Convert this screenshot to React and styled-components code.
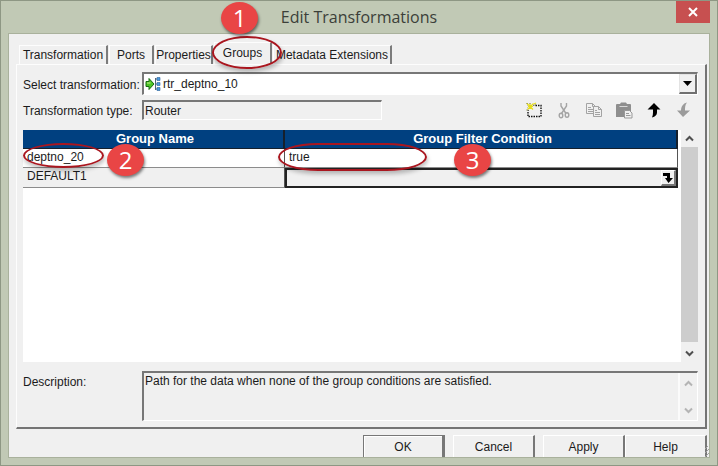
import React, { useState } from 'react'
import styled, { createGlobalStyle } from 'styled-components'

const GlobalStyle = createGlobalStyle`
    * {
        box-sizing: border-box;
    }
    body {
        margin: 0;
        font-family: "Liberation Sans", Arial, sans-serif;
        font-size: 12px;
        color: #1b1b1b;
    }
    button, input, select, textarea {
        font: inherit;
        color: inherit;
        margin: 0;
        padding: 0;
        border: 0;
        border-radius: 0;
        background: transparent;
        outline: none;
    }
`

const Window = styled.div`
    display: flex;
    flex-direction: column;
    min-height: 100vh;
    padding: 0 7px 7px;
    background: #c1c9b5;
    border: 1px solid #8e9784;
`

const TitleBar = styled.header`
    display: grid;
    grid-template-columns: 34px 1fr 34px;
    height: 32px;

    h1 {
        margin: 0;
        font: 400 16px/32px "Open Sans", "Noto Sans", sans-serif;
        color: #3c3f39;
        text-align: center;
    }
`

const CloseButton = styled.button`
    grid-column: 3;
    display: flex;
    align-items: center;
    justify-content: center;
    height: 22px;
    background: #c75050;
`

const Body = styled.main`
    position: relative;
    flex: 1;
    display: flex;
    flex-direction: column;
    padding: 8px 2px 0 7px;
    background: #f0f0f0;
    border: 1px solid #a9b19c;
`

const TabList = styled.div`
    display: flex;
    align-items: flex-end;
    gap: 1px;
    height: 22px;
    padding-left: 3px;
`

const Tab = styled.button`
    position: relative;
    width: ${p => p.$width}px;
    height: ${p => p.$active ? '22px' : '19px'};
    padding-bottom: ${p => p.$active ? '1px' : '0'};
    white-space: nowrap;
    border-top: 1px solid #fdfdfd;
    border-left: 1px solid #fdfdfd;
    border-right: 2px solid #7c7c7c;
`

const Panel = styled.section`
    flex: 1;
    display: flex;
    flex-direction: column;
    padding: 7px 7px 6px 6px;
    border: solid;
    border-width: 1px 2px 2px 1px;
    border-color: #fdfdfd #747474 #747474 #fdfdfd;
`

const FieldRow = styled.div`
    display: grid;
    grid-template-columns: 119px 1fr auto;
    align-items: ${p => p.$top ? 'start' : 'center'};
    margin-top: ${p => p.$gap || 0}px;

    label {
        padding-top: ${p => p.$top ? '4px' : '2px'};
    }
`

const Sunken = styled.div`
    display: flex;
    align-items: center;
    border: solid;
    border-width: 2px 1px 1px 2px;
    border-color: #777 #fff #fff #777;
`

const Combo = styled(Sunken)`
    grid-column: 2 / 4;
    height: 23px;
    padding-left: 1px;
    gap: 2px;
    background: #fff;

    select {
        flex: 1;
        height: 20px;
        appearance: none;
    }
`

const ComboArrow = styled.span`
    display: flex;
    align-items: center;
    justify-content: center;
    width: 18px;
    height: 20px;
    background: #f0f0f0;
    border: solid;
    border-width: 1px 2px 2px 1px;
    border-color: #e3e3e3 #707070 #707070 #e3e3e3;
`

const TypeField = styled(Sunken)`
    width: 240px;
    height: 20px;

    input {
        width: 100%;
        padding-left: 1px;
    }
`

const Toolbar = styled.div`
    display: flex;
    gap: 10px;
    padding-right: 4px;
`

const ToolButton = styled.button`
    display: flex;
    align-items: center;
    justify-content: center;
    width: 20px;
    height: 20px;
`

const GridArea = styled.div`
    flex: 1;
    display: flex;
    align-items: flex-start;
    gap: 3px;
    margin-top: 10px;
    background: #fff;
`

const Grid = styled.table`
    flex: 1;
    table-layout: fixed;
    border-collapse: separate;
    border-spacing: 0;

    th {
        height: 19px;
        padding: 0 0 0 4px;
        font-size: 13px;
        line-height: 16px;
        color: #fff;
        background: #004080;
        border-right: 2px solid #16202c;
        border-bottom: 1px solid #16202c;
    }
    th:first-child {
        width: 40%;
    }
`

const Cell = styled.td`
    position: relative;
    height: ${p => p.$grey ? '20px' : '19px'};
    padding: 0 0 0 4px;
    line-height: 16px;
    vertical-align: top;
    background: ${p => p.$grey ? '#f0f0f0' : '#fff'};
    border-right: 1px solid #555;
    border-bottom: 1px solid #8c8c8c;
    ${p => p.$focused && 'border: 2px solid #222;'}

    div {
        display: flex;
        justify-content: space-between;
    }
    input {
        display: block;
        width: 100%;
        height: 15px;
    }
`

const OpenEditor = styled.button`
    display: flex;
    align-items: center;
    justify-content: center;
    flex: none;
    width: 15px;
    height: 16px;
    border: solid;
    border-width: 1px 2px 2px 1px;
    border-color: #fff #777 #777 #fff;
`

const ScrollBar = styled.div`
    align-self: stretch;
    display: flex;
    flex-direction: column;
    justify-content: space-between;
    width: 17px;
    color: ${p => p.$off ? '#b4b4b4' : '#505050'};
    background: #f0f0f0;

    button {
        display: flex;
        align-items: center;
        justify-content: center;
        height: ${p => p.$off ? '20px' : '17px'};
    }
`

const Thumb = styled.div`
    flex: 1;
    margin-bottom: 3px;
    background: #cdcdcd;
`

const Description = styled(Sunken)`
    grid-column: 2 / 4;
    height: 50px;
    align-items: stretch;

    textarea {
        flex: 1;
        padding: 1px;
        line-height: 15px;
        resize: none;
        overflow: hidden;
        border-right: 2px solid #fbfbfb;
    }
`

const Footer = styled.footer`
    display: flex;
    justify-content: flex-end;
    margin-top: 6px;
`

const FooterButton = styled.button`
    width: 82px;
    height: 22px;
    margin-right: ${p => p.$gap || 0}px;
    border: solid;
    border-width: 1px 2px 0 1px;
    border-color: #fff #777 #777 #fff;
    ${p => p.$primary && `
        border-color: #777;
        border-width: 1px 3px 0 1px;
        box-shadow: inset 1px 1px #fff;
    `}
`

const SizeGrip = styled.svg`
    position: absolute;
    right: 0;
    bottom: 0;
`

// red ellipse and numbered bubble, both are placed over their parent
const Ring = styled.span`
    position: absolute;
    z-index: 1;
    left: ${p => p.$x}px;
    top: ${p => p.$y}px;
    width: ${p => p.$w}px;
    height: ${p => p.$h}px;
    border: 2px solid #a9161f;
    border-radius: ${p => p.$long ? '40px / 14px' : '50%'};
    box-shadow: 1px 3px 4px rgba(0, 0, 0, .25);
    pointer-events: none;
`

const Bubble = styled.span`
    position: absolute;
    z-index: 2;
    left: ${p => p.$x}px;
    top: ${p => p.$y}px;
    width: 37px;
    height: 32px;
    font: 400 24px/31px "Open Sans", "Noto Sans", sans-serif;
    color: #fff;
    text-align: center;
    background: #e94545;
    border-radius: 50%;
    box-shadow: 1px 2px 3px rgba(0, 0, 0, .5);
    pointer-events: none;
`

const Chevron = ({ up }) => (
    <svg width="9" height="7" viewBox="0 0 9 7" fill="none" stroke="currentColor" strokeWidth="2">
        <path d={up ? 'M1 5.5 4.5 2 8 5.5' : 'M1 1.5 4.5 5 8 1.5'} />
    </svg>
)

const RouterIcon = () => (
    <svg width="16" height="16" viewBox="0 0 16 16">
        <path d="M1 5.500h3V2.500L9 8l-5 5.500v-3H1z" fill="#4cc425" stroke="#176b12" />
        <path d="M2 7h3.500" stroke="#c4f08a" />
        <path d="M10.500 2v12M10 3h2M10 8h2M10 13h2" stroke="#53677d" fill="none" />
        <path d="M12 1.500h3v3h-3zM12 6.500h3v3h-3zM12 11.500h3v3h-3z" fill="#4a9be0" stroke="#2c6299" strokeWidth=".6" />
    </svg>
)

const NewIcon = () => (
    <svg width="18" height="18" viewBox="0 0 18 18" fill="none">
        <path d="M3 4.500h13v11H3z" stroke="#111" strokeWidth="1.400" strokeDasharray="1.500 1" />
        <path d="M5 1v9M1 5.500h9M2 2l6 7M8 2 2 9" stroke="#f0f0f0" strokeWidth="2" />
        <path d="M5 3v5M3 5.500h5M2 2.500l6 6M8.500 2.500l-6 6M9 3l2-1" stroke="#e5dc19" strokeWidth="1.200" />
        <path d="M1.500 2.500h1M4.500 2.500h1M10 4h1M1.500 9h1" stroke="#77772a" />
    </svg>
)

const CutIcon = () => (
    <svg width="12" height="17" viewBox="0 0 12 17" fill="none" stroke="#a3a3a3" strokeWidth="1.400">
        <path d="M3 1v3l5 7.500M8.500 1v3l-5 7.500" />
        <ellipse cx="3" cy="13.500" rx="1.800" ry="2.300" />
        <ellipse cx="9" cy="13" rx="1.800" ry="2.300" />
    </svg>
)

const CopyIcon = () => (
    <svg width="18" height="16" viewBox="0 0 18 16" fill="#f0f0f0" stroke="#a3a3a3">
        <path d="M1.500 1.500h6l3 3v7h-9zM7.500 1.500v3h3M3 5.500h3M3 7.500h5M3 9.500h5" />
        <path d="M8.500 4.500h5l3 3v7h-8zM13.500 4.500v3h3M10 8.500h2M10 10.500h5M10 12.500h5" />
    </svg>
)

const PasteIcon = () => (
    <svg width="18" height="17" viewBox="0 0 18 17">
        <path d="M1 3q0-1 1-1h3l1-1.500h5L12 2h3q1 0 1 1v12H1z" fill="#8e8e8e" />
        <path d="M4.500 4.500h8" stroke="#d8d8d8" />
        <path d="M9.500 8.500h5l2.500 2.500v5H9.500z" fill="#f0f0f0" stroke="#999" />
        <path d="M11 11.500h3M11 13.500h4.500" stroke="#999" />
    </svg>
)

const ArrowIcon = ({ down }) => (
    <svg width="14" height="16" viewBox="0 0 14 16" fill={down ? '#9b9b9b' : '#000'}>
        {down
            ? <path d="M6 15 0 8.500h4c0-4 2-7 6-8-2 2-2 5-2 8h5z" />
            : <path d="M7 1l6.500 6.500H10v3q0 3.500-5 5 1-2 1-5v-3H.500z" />}
    </svg>
)

const tabs = [
    { name: 'Transformation', width: 89 },
    { name: 'Ports', width: 45 },
    { name: 'Properties', width: 58 },
    { name: 'Groups', width: 58 },
    { name: 'Metadata Extensions', width: 119 },
]

const tools = [
    { name: 'New', icon: <NewIcon /> },
    { name: 'Cut', icon: <CutIcon /> },
    { name: 'Copy', icon: <CopyIcon /> },
    { name: 'Paste', icon: <PasteIcon /> },
    { name: 'Move up', icon: <ArrowIcon /> },
    { name: 'Move down', icon: <ArrowIcon down /> },
]

export default function App() {
    const [active, setActive] = useState('Groups')
    const [group, setGroup] = useState('deptno_20')
    const [filter, setFilter] = useState('true')

    return (
        <Window>
            <GlobalStyle />
            <TitleBar>
                <span />
                <h1>Edit Transformations</h1>
                <CloseButton aria-label="Close">
                    <svg width="10" height="10" viewBox="0 0 10 10" stroke="#fff" strokeWidth="2">
                        <path d="M1 1l8 8M9 1 1 9" />
                    </svg>
                </CloseButton>
            </TitleBar>
            <Body>
                <TabList role="tablist">
                    {tabs.map(t => (
                        <Tab
                            key={t.name}
                            role="tab"
                            aria-selected={active === t.name}
                            $active={active === t.name}
                            $width={t.width}
                            onClick={() => setActive(t.name)}
                        >
                            {t.name}
                            {t.name === 'Groups' && <>
                                <Ring $x={-3} $y={-7} $w={70} $h={33} />
                                <Bubble $x={6} $y={-41}>1</Bubble>
                            </>}
                        </Tab>
                    ))}
                </TabList>
                <Panel>
                    <FieldRow>
                        <label htmlFor="transformation">Select transformation:</label>
                        <Combo>
                            <RouterIcon />
                            <select id="transformation">
                                <option>rtr_deptno_10</option>
                            </select>
                            <ComboArrow>
                                <svg width="9" height="5" viewBox="0 0 9 5"><path d="M0 0h9L4.500 5z" /></svg>
                            </ComboArrow>
                        </Combo>
                    </FieldRow>
                    <FieldRow $gap={5}>
                        <label htmlFor="type">Transformation type:</label>
                        <TypeField>
                            <input id="type" value="Router" readOnly />
                        </TypeField>
                        <Toolbar>
                            {tools.map(t => (
                                <ToolButton key={t.name} aria-label={t.name}>{t.icon}</ToolButton>
                            ))}
                        </Toolbar>
                    </FieldRow>
                    <GridArea>
                        <Grid>
                            <thead>
                                <tr>
                                    <th>Group Name</th>
                                    <th>Group Filter Condition</th>
                                </tr>
                            </thead>
                            <tbody>
                                <tr>
                                    <Cell>
                                        <input aria-label="Group name" value={group} onChange={e => setGroup(e.target.value)} />
                                        <Ring $x={0} $y={-6} $w={81} $h={25} />
                                        <Bubble $x={84} $y={-5}>2</Bubble>
                                    </Cell>
                                    <Cell>
                                        <input aria-label="Filter condition" value={filter} onChange={e => setFilter(e.target.value)} />
                                        <Ring $long $x={-7} $y={-6} $w={149} $h={28} />
                                        <Bubble $x={169} $y={-5}>3</Bubble>
                                    </Cell>
                                </tr>
                                <tr>
                                    <Cell $grey>DEFAULT1</Cell>
                                    <Cell $grey $focused>
                                        <div>
                                            <input aria-label="Default filter condition" />
                                            <OpenEditor aria-label="Open editor">
                                                <svg width="10" height="11" viewBox="0 0 10 11">
                                                    <path d="M0 1h7v5h3L5.500 11 2 6h2V4H0z" />
                                                </svg>
                                            </OpenEditor>
                                        </div>
                                    </Cell>
                                </tr>
                            </tbody>
                        </Grid>
                        <ScrollBar>
                            <button aria-label="Scroll up"><Chevron up /></button>
                            <Thumb />
                            <button aria-label="Scroll down"><Chevron /></button>
                        </ScrollBar>
                    </GridArea>
                    <FieldRow $top $gap={9}>
                        <label htmlFor="description">Description:</label>
                        <Description>
                            <textarea
                                id="description"
                                readOnly
                                value="Path for the data when none of the group conditions are satisfied."
                            />
                            <ScrollBar $off>
                                <button aria-label="Scroll description up"><Chevron up /></button>
                                <button aria-label="Scroll description down"><Chevron /></button>
                            </ScrollBar>
                        </Description>
                    </FieldRow>
                </Panel>
                <Footer>
                    <FooterButton $primary $gap={8}>OK</FooterButton>
                    <FooterButton $gap={8}>Cancel</FooterButton>
                    <FooterButton>Apply</FooterButton>
                    <FooterButton>Help</FooterButton>
                </Footer>
                <SizeGrip width="4" height="12" viewBox="0 0 4 12" stroke="#a0a0a0">
                    <path d="M0 4l3-3M0 8l4-4M0 12l4-4" />
                </SizeGrip>
            </Body>
        </Window>
    )
}
